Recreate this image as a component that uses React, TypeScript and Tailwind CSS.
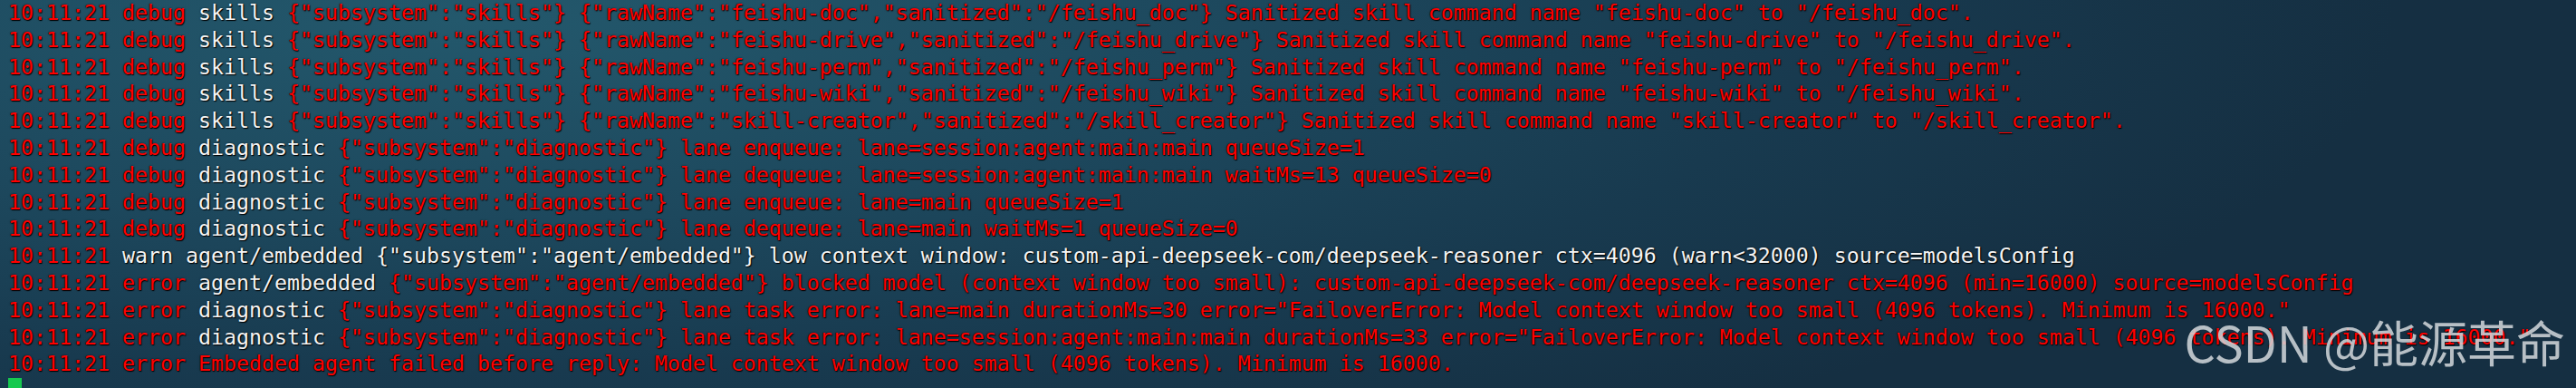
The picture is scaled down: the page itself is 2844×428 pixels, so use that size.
import React from "react";

type Seg = [string, "r" | "w"];

const T = "10:11:21 ";

const skills = (raw: string, san: string): Seg[] => [
  [T + "debug ", "r"],
  ["skills", "w"],
  [
    ` {"subsystem":"skills"} {"rawName":"${raw}","sanitized":"${san}"} Sanitized skill command name "${raw}" to "${san}".`,
    "r",
  ],
];

const diag = (lvl: string, rest: string): Seg[] => [
  [T + lvl + " ", "r"],
  ["diagnostic", "w"],
  [` {"subsystem":"diagnostic"} ${rest}`, "r"],
];

const lines: Seg[][] = [
  skills("feishu-doc", "/feishu_doc"),
  skills("feishu-drive", "/feishu_drive"),
  skills("feishu-perm", "/feishu_perm"),
  skills("feishu-wiki", "/feishu_wiki"),
  skills("skill-creator", "/skill_creator"),
  diag("debug", "lane enqueue: lane=session:agent:main:main queueSize=1"),
  diag("debug", "lane dequeue: lane=session:agent:main:main waitMs=13 queueSize=0"),
  diag("debug", "lane enqueue: lane=main queueSize=1"),
  diag("debug", "lane dequeue: lane=main waitMs=1 queueSize=0"),
  [
    [T, "r"],
    [
      'warn agent/embedded {"subsystem":"agent/embedded"} low context window: custom-api-deepseek-com/deepseek-reasoner ctx=4096 (warn<32000) source=modelsConfig',
      "w",
    ],
  ],
  [
    [T + "error ", "r"],
    ["agent/embedded", "w"],
    [
      ' {"subsystem":"agent/embedded"} blocked model (context window too small): custom-api-deepseek-com/deepseek-reasoner ctx=4096 (min=16000) source=modelsConfig',
      "r",
    ],
  ],
  diag(
    "error",
    'lane task error: lane=main durationMs=30 error="FailoverError: Model context window too small (4096 tokens). Minimum is 16000."'
  ),
  diag(
    "error",
    'lane task error: lane=session:agent:main:main durationMs=33 error="FailoverError: Model context window too small (4096 tokens). Minimum is 16000."'
  ),
  [
    [
      T +
        "error Embedded agent failed before reply: Model context window too small (4096 tokens). Minimum is 16000.",
      "r",
    ],
  ],
];

export default function App() {
  return (
    <div className="relative h-[428px] w-[2844px] overflow-hidden bg-[#17354a]">
      <div className="absolute inset-0 bg-[radial-gradient(ellipse_75%_130%_at_18%_5%,#23586c_0%,#1d485d_40%,#183a4f_70%,#152f42_100%)]" />
      <div className="relative pl-[9px] mt-[-1px] font-['DejaVu_Sans_Mono',monospace] text-[23.25px] leading-[29.8px] whitespace-pre [text-shadow:1px_1px_1px_#000,0_0_2px_rgba(0,0,0,0.7)]">
        {lines.map((segs, i) => (
          <div key={i} className="h-[29.8px]">
            {segs.map(([t, c], j) => (
              <span key={j} className={c === "r" ? "text-[#ff0000]" : "text-[#f4f4f4]"}>
                {t}
              </span>
            ))}
          </div>
        ))}
        <div className="h-[29.8px] flex items-start pt-[1px]">
          <span className="inline-block w-[15px] h-[29px] bg-[#16c94f]" />
        </div>
      </div>
      <div className="absolute right-[12px] top-[350px] font-['Noto_Sans_CJK_SC',sans-serif] text-[54px] leading-none text-[rgba(212,216,220,0.85)] whitespace-pre">
        CSDN @能源革命
      </div>
    </div>
  );
}
